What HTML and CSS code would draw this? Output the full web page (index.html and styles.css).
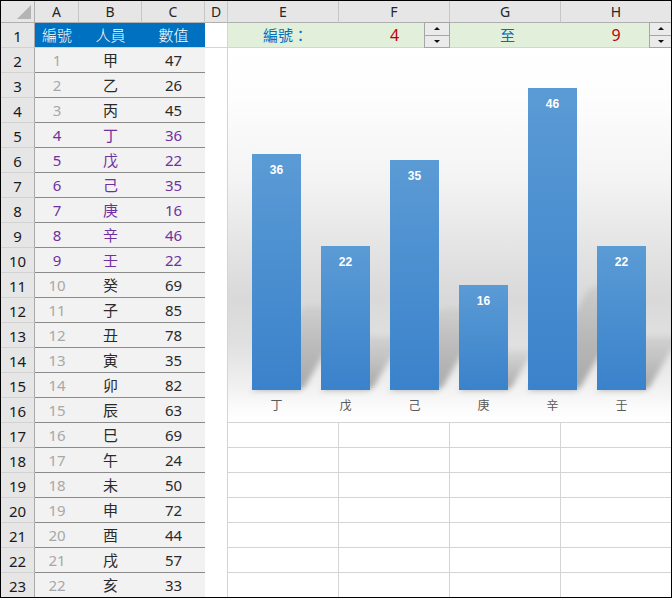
FILE: index.html
```html
<!DOCTYPE html>
<html>
<head>
<meta charset="utf-8">
<title>Sheet</title>
<link rel="stylesheet" href="styles.css">
</head>
<body>
<div class="frame">
  <div class="sheet">
    <div class="corner"><span class="tri"></span></div>
    <div class="ch">A</div><div class="ch">B</div><div class="ch">C</div><div class="ch">D</div>
    <div class="ch">E</div><div class="ch">F</div><div class="ch">G</div><div class="ch last">H</div>

    <div class="rh">1</div>
    <div class="bh">編號</div><div class="bh">人員</div><div class="bh">數值</div>
    <div class="dcol top"></div>
    <div class="g lbl">編號：</div>
    <div class="g num">4<span class="spin"><span class="sb"><i class="up"></i></span><span class="sb"><i class="dn"></i></span></span></div>
    <div class="g lbl">至</div>
    <div class="g num">9<span class="spin sh"><span class="sb"><i class="up"></i></span><span class="sb"><i class="dn"></i></span></span></div>

    <div class="chart">
      <div class="plot">
        <div class="slot"><div class="shadow" style="height:84px"></div><div class="bar" style="height:236px">36</div></div>
        <div class="slot"><div class="shadow" style="height:54px"></div><div class="bar" style="height:144px">22</div></div>
        <div class="slot"><div class="shadow" style="height:82px"></div><div class="bar" style="height:230px">35</div></div>
        <div class="slot"><div class="shadow" style="height:40px"></div><div class="bar" style="height:105px">16</div></div>
        <div class="slot"><div class="shadow" style="height:104px"></div><div class="bar" style="height:302px">46</div></div>
        <div class="slot"><div class="shadow" style="height:54px"></div><div class="bar" style="height:144px">22</div></div>
      </div>
      <div class="cats"><span>丁</span><span>戊</span><span>己</span><span>庚</span><span>辛</span><span>壬</span></div>
    </div>

    <div class="rh">2</div><div class="d a">1</div><div class="d">甲</div><div class="d">47</div><div class="dcol"></div>
    <div class="rh">3</div><div class="d a">2</div><div class="d">乙</div><div class="d">26</div><div class="dcol"></div>
    <div class="rh">4</div><div class="d a">3</div><div class="d">丙</div><div class="d">45</div><div class="dcol"></div>
    <div class="rh">5</div><div class="d p">4</div><div class="d p">丁</div><div class="d p">36</div><div class="dcol"></div>
    <div class="rh">6</div><div class="d p">5</div><div class="d p">戊</div><div class="d p">22</div><div class="dcol"></div>
    <div class="rh">7</div><div class="d p">6</div><div class="d p">己</div><div class="d p">35</div><div class="dcol"></div>
    <div class="rh">8</div><div class="d p">7</div><div class="d p">庚</div><div class="d p">16</div><div class="dcol"></div>
    <div class="rh">9</div><div class="d p">8</div><div class="d p">辛</div><div class="d p">46</div><div class="dcol"></div>
    <div class="rh">10</div><div class="d p">9</div><div class="d p">壬</div><div class="d p">22</div><div class="dcol"></div>
    <div class="rh">11</div><div class="d a">10</div><div class="d">癸</div><div class="d">69</div><div class="dcol"></div>
    <div class="rh">12</div><div class="d a">11</div><div class="d">子</div><div class="d">85</div><div class="dcol"></div>
    <div class="rh">13</div><div class="d a">12</div><div class="d">丑</div><div class="d">78</div><div class="dcol"></div>
    <div class="rh">14</div><div class="d a">13</div><div class="d">寅</div><div class="d">35</div><div class="dcol"></div>
    <div class="rh">15</div><div class="d a">14</div><div class="d">卯</div><div class="d">82</div><div class="dcol"></div>
    <div class="rh">16</div><div class="d a">15</div><div class="d">辰</div><div class="d">63</div><div class="dcol"></div>

    <div class="rh">17</div><div class="d a">16</div><div class="d">巳</div><div class="d">69</div><div class="dcol"></div><div class="e"></div><div class="e"></div><div class="e"></div><div class="e last"></div>
    <div class="rh">18</div><div class="d a">17</div><div class="d">午</div><div class="d">24</div><div class="dcol"></div><div class="e"></div><div class="e"></div><div class="e"></div><div class="e last"></div>
    <div class="rh">19</div><div class="d a">18</div><div class="d">未</div><div class="d">50</div><div class="dcol"></div><div class="e"></div><div class="e"></div><div class="e"></div><div class="e last"></div>
    <div class="rh">20</div><div class="d a">19</div><div class="d">申</div><div class="d">72</div><div class="dcol"></div><div class="e"></div><div class="e"></div><div class="e"></div><div class="e last"></div>
    <div class="rh">21</div><div class="d a">20</div><div class="d">酉</div><div class="d">44</div><div class="dcol"></div><div class="e"></div><div class="e"></div><div class="e"></div><div class="e last"></div>
    <div class="rh">22</div><div class="d a">21</div><div class="d">戌</div><div class="d">57</div><div class="dcol"></div><div class="e"></div><div class="e"></div><div class="e"></div><div class="e last"></div>
    <div class="rh">23</div><div class="d a">22</div><div class="d">亥</div><div class="d">33</div><div class="dcol"></div><div class="e"></div><div class="e"></div><div class="e"></div><div class="e last"></div>
  </div>
</div>
</body>
</html>
```

FILE: styles.css
```css
* { box-sizing: border-box; }

body {
  margin: 0;
  background: #ffffff;
  font-family: "Noto Sans", "Noto Sans CJK TC", sans-serif;
  color: #222222;
}

.frame {
  width: 672px;
  height: 598px;
  border: 1px solid #000000;
  overflow: hidden;
  background: #ffffff;
}

.sheet {
  display: grid;
  grid-template-columns: 34px 44px 63px 63px 23px 111px 111px 111px 110px;
  grid-template-rows: 22px repeat(23, 25px);
}

.sheet > div {
  display: flex;
  align-items: center;
  justify-content: center;
  font-size: 15px;
  line-height: 1;
  white-space: nowrap;
}

.corner {
  background: #e6e6e6;
  border-right: 1px solid #b0b0b0;
  border-bottom: 1px solid #b0b0b0;
  position: relative;
}

.tri {
  position: absolute;
  right: 3px;
  bottom: 3px;
  width: 0;
  height: 0;
  border-left: 14px solid transparent;
  border-bottom: 14px solid #b4b4b4;
}

.ch {
  background: #e6e6e6;
  border-right: 1px solid #c6c6c6;
  border-bottom: 1px solid #b0b0b0;
  font-size: 14px !important;
  color: #262626;
  padding-top: 1px;
}

.ch.last { border-right: none; }

.rh {
  background: #e6e6e6;
  border-right: 1px solid #a8a8a8;
  border-bottom: 1px solid #d2d2d2;
  color: #1a1a1a;
  padding-top: 2px;
}

.bh {
  background: #0070c0;
  color: #ffffff;
  border-bottom: 1px solid #d4d4d4;
  font-weight: 300;
}

.dcol {
  background: #ffffff;
  border-right: 1px solid #d4d4d4;
}

.dcol.top { border-bottom: 1px solid #d4d4d4; }

.d {
  background: #f2f2f2;
  border-bottom: 1px solid #8a8a8a;
  color: #2a2a2a;
}

.d.a { color: #a8a8a8; }
.d.p { color: #7030a0; }

.g {
  background: #e2efda;
  border-bottom: 1px solid #d4d4d4;
  position: relative;
}

.g.lbl { color: #0070c0; padding-left: 4px; }
.g.num { color: #c00000; font-size: 16px !important; }

.spin {
  position: absolute;
  right: 0;
  top: -1px;
  width: 26px;
  height: 26px;
  display: flex;
  flex-direction: column;
  border: 1px solid #a6a6a6;
  background: #e8e8e8;
}

.spin.sh { right: -2px; width: 24px; }

.sb {
  flex: 1;
  display: flex;
  align-items: center;
  justify-content: center;
  background: #ebebeb;
}

.sb + .sb { border-top: 1px solid #a6a6a6; }

.up {
  width: 0;
  height: 0;
  border-left: 3px solid transparent;
  border-right: 3px solid transparent;
  border-bottom: 3px solid #111111;
}

.dn {
  width: 0;
  height: 0;
  border-left: 3px solid transparent;
  border-right: 3px solid transparent;
  border-top: 3px solid #111111;
}

.e {
  background: #ffffff;
  border-right: 1px solid #d4d4d4;
  border-bottom: 1px solid #d4d4d4;
}

.e.last { border-right: none; }

.sheet > .chart {
  grid-column: 6 / 10;
  grid-row: 3 / 18;
  display: flex;
  flex-direction: column;
  align-items: stretch;
  justify-content: flex-start;
  border-bottom: 1px solid #d4d4d4;
  overflow: hidden;
  background: linear-gradient(to bottom,
    #ffffff 0px, #fdfdfd 50px, #f4f4f4 130px, #e4e4e4 200px,
    #d9d9d9 250px, #e0e0e0 295px, #efefef 335px, #fbfbfb 360px, #ffffff 374px);
}

.plot {
  height: 342px;
  display: flex;
  align-items: flex-end;
  padding-left: 14px;
}

.slot {
  width: 69px;
  height: 100%;
  position: relative;
  display: flex;
  justify-content: center;
  align-items: flex-end;
}

.bar {
  position: relative;
  z-index: 1;
  width: 49px;
  padding-top: 9px;
  background: linear-gradient(to bottom, #5b9bd5, #3a82cb);
  color: #ffffff;
  text-align: center;
  font-family: "Liberation Sans", "Noto Sans", sans-serif;
  font-weight: bold;
  font-size: 12px;
  line-height: 14px;
}

.shadow {
  position: absolute;
  left: 12px;
  bottom: 0;
  width: 49px;
  transform-origin: bottom left;
  transform: skewX(-30deg);
  background: linear-gradient(to top, rgba(0,0,0,0.3), rgba(0,0,0,0.05));
  filter: blur(3px);
}

.cats {
  display: flex;
  padding-left: 14px;
}

.cats span {
  width: 69px;
  text-align: center;
  font-family: "Noto Sans CJK TC", sans-serif;
  font-size: 12px;
  line-height: 30px;
  color: #595959;
}
```
